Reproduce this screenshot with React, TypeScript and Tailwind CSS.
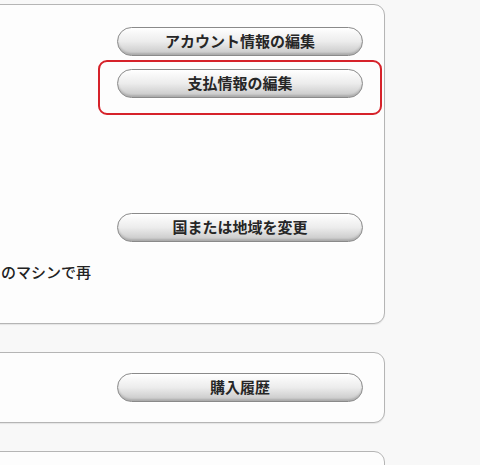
import React from "react";

const font = { fontFamily: '"Liberation Sans", "Noto Sans CJK JP", sans-serif' };

function PillButton({ label }: { label: string }) {
  return (
    <button
      className="flex h-[29px] w-[246px] items-center justify-center rounded-full border border-[#8a8a8a] bg-gradient-to-b from-[#ffffff] via-[#ececec] to-[#c6c6c6] text-[15px] font-semibold leading-none text-[#262626] shadow-[inset_0_-2px_2px_rgba(0,0,0,0.14),0_1px_0_rgba(255,255,255,0.9)]"
      style={font}
    >
      {label}
    </button>
  );
}

export default function App() {
  return (
    <div className="relative h-[465px] w-[480px] overflow-hidden bg-[#f8f8f8]" style={font}>
      <div className="flex flex-col gap-[28px] pt-[4px]">
        {/* Panel 1 */}
        <div className="-ml-[20px] w-[405px] rounded-[11px] border border-[#b5b5b5] bg-[#fdfdfd] pb-[40px] pt-[22px] shadow-[0_1px_1px_rgba(0,0,0,0.08)]">
          <div className="flex justify-end pr-[21px]">
            <div className="flex flex-col">
              <PillButton label="アカウント情報の編集" />
              <div className="mt-[13px]">
                <PillButton label="支払情報の編集" />
              </div>
              <div className="mt-[115px]">
                <PillButton label="国または地域を変更" />
              </div>
            </div>
          </div>
          <div className="mt-[21px] flex w-[110px] justify-end">
            <span className="whitespace-nowrap text-[15px] font-medium leading-[20px] text-[#222]">
              のマシンで再
            </span>
          </div>
        </div>

        {/* Panel 2 */}
        <div className="-ml-[20px] w-[405px] rounded-[11px] border border-[#b5b5b5] bg-[#fdfdfd] pb-[20px] pt-[20px] shadow-[0_1px_1px_rgba(0,0,0,0.08)]">
          <div className="flex justify-end pr-[21px]">
            <PillButton label="購入履歴" />
          </div>
        </div>

        {/* Panel 3 */}
        <div className="-ml-[20px] h-[80px] w-[405px] rounded-[11px] border border-[#b5b5b5] bg-[#fdfdfd]" />
      </div>

      {/* Red annotation rectangle */}
      <div className="pointer-events-none absolute left-[98px] top-[60px] h-[55px] w-[284px] rounded-[9px] border-2 border-[#d6222a]" />
    </div>
  );
}
